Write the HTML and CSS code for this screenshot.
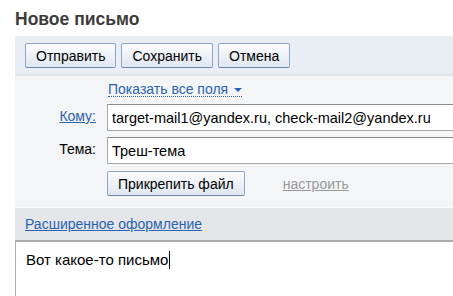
FILE: index.html
```html
<!DOCTYPE html>
<html lang="ru">
<head>
    <meta charset="UTF-8">
    <meta name="viewport" content="width=device-width, initial-scale=1.0">
    <title>Новое письмо</title>
    <link rel="stylesheet" href="styles.css">
</head>
<body>

    <h1 class="title">Новое письмо</h1>

    <div class="compose">
        <div class="toolbar">
            <button class="btn">Отправить</button>
            <button class="btn">Сохранить</button>
            <button class="btn">Отмена</button>
        </div>

        <div class="fields">
            <div class="row">
                <span></span>
                <a class="show-all" href="#">Показать все поля</a>
            </div>
            <div class="row">
                <a class="label link" href="#">Кому:</a>
                <input class="field" type="text" value="target-mail1@yandex.ru, check-mail2@yandex.ru">
            </div>
            <div class="row">
                <span class="label">Тема:</span>
                <input class="field" type="text" value="Треш-тема">
            </div>
            <div class="row">
                <span></span>
                <div class="attach">
                    <button class="btn btn-attach">Прикрепить файл</button>
                    <a class="setup" href="#">настроить</a>
                </div>
            </div>
        </div>

        <div class="format-bar">
            <a class="link" href="#">Расширенное оформление</a>
        </div>

        <div class="body-text">Вот какое-то письмо<span class="caret"></span></div>
    </div>

</body>
</html>
```

FILE: styles.css
```css
html, body {
    overflow: hidden;
}
body {
    margin: 0;
    font-family: "Liberation Sans", Arial, sans-serif;
    font-size: 14px;
    color: #000;
    background: #fff;
}
.title {
    margin: 0;
    padding: 9px 0 0 15px;
    height: 27px;
    font-size: 17.5px;
    font-weight: bold;
    color: #3c3c3c;
}
.compose {
    margin-left: 15px;
    width: 480px;
}
.toolbar {
    display: flex;
    gap: 5px;
    padding: 7px 10px 6px;
    background: #e9eef5;
    border-bottom: 2px solid #dde4ee;
}
.btn {
    height: 25px;
    padding: 0 10px;
    font-family: "Liberation Sans", Arial, sans-serif;
    font-size: 14px;
    color: #000;
    background: linear-gradient(#fbfcfd, #dfe7f1);
    border: 1px solid #8ea5c3;
    border-bottom-color: #6f89ab;
    border-radius: 2px;
}
.fields {
    background: #f4f5f7;
    padding: 6px 0 11px;
}
.row {
    display: grid;
    grid-template-columns: 92px 1fr;
    align-items: center;
}
.row + .row {
    margin-top: 6px;
}
.label {
    justify-self: end;
    margin-right: 11px;
    margin-bottom: 3px;
}
.link {
    color: #2a62b0;
    text-decoration: underline;
}
.show-all {
    margin-left: 1px;
    margin-bottom: 1px;
    color: #2a62b0;
    text-decoration: none;
    border-bottom: 1px dotted #2a62b0;
    justify-self: start;
    line-height: 14px;
}
.show-all::after {
    content: "";
    display: inline-block;
    margin-left: 6px;
    vertical-align: 2px;
    border-left: 4px solid transparent;
    border-right: 4px solid transparent;
    border-top: 4px solid #2a62b0;
}
.field {
    box-sizing: border-box;
    height: 27px;
    margin: 0;
    padding: 0 4px;
    font-family: "Liberation Sans", Arial, sans-serif;
    font-size: 14.5px;
    color: #000;
    background: #fff;
    border: 1px solid #a9a9a9;
    border-top-color: #8c8c8c;
    outline: none;
}
.attach {
    display: flex;
    align-items: center;
    gap: 38px;
    margin-top: 1px;
}
.btn-attach {
    height: 25px;
    padding: 0 10px;
}
.setup {
    color: #999;
    text-decoration: underline;
}
.format-bar {
    height: 32px;
    padding-left: 10px;
    line-height: 32px;
    background: #e5e6ea;
    border-top: 1px solid #fbfbfc;
    border-bottom: 2px solid #aeaeb2;
}
.body-text {
    height: 60px;
    padding: 9px 10px;
    font-size: 15px;
    border-left: 1px solid #aeaeb2;
}
.caret {
    display: inline-block;
    width: 1px;
    height: 18px;
    margin-left: 1px;
    vertical-align: -4px;
    background: #000;
}
```
